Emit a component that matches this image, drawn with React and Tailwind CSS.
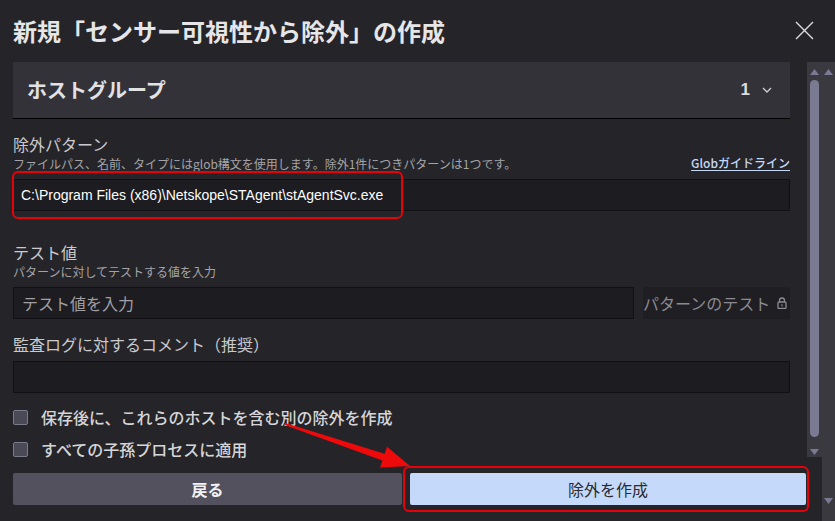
import React from 'react';

const jp = { fontFamily: '"Noto Sans CJK JP", "Noto Sans", sans-serif' };
const latin = { fontFamily: '"Liberation Sans", "Noto Sans CJK JP", sans-serif' };

// small triangle used by the scrollbars
const Tri = ({ down = false }) => (
    <svg width="9" height="6" viewBox="0 0 9 6" className="block">
        {down ? <path d="M0 0 H9 L4.5 6 Z" fill="#7b7a93" /> : <path d="M0 6 H9 L4.5 0 Z" fill="#7b7a93" />}
    </svg>
);

const FieldLabel = ({ title, sub, className = '' }) => (
    <div className={className}>
        <div className="text-[16px] leading-[22px] text-[#cacacd]">{title}</div>
        {sub && <div className="text-[12px] leading-[18px] text-[#a4a4a8]">{sub}</div>}
    </div>
);

const Checkbox = ({ label, className = '' }) => (
    <div className={`flex items-center gap-[13px] ${className}`}>
        <span className="h-[15px] w-[15px] rounded-[2px] border border-[#7c7b8c] bg-[#4a4956]" />
        <span className="text-[16px] font-medium leading-[18px] text-[#d6d6d8]">{label}</span>
    </div>
);

export default function App() {
    return (
        <div className="relative h-[521px] w-[835px] overflow-hidden bg-[#252429] text-white" style={jp}>
            {/* header */}
            <div className="flex h-[62px] items-center justify-between pl-[13px] pr-[21px]">
                <h1 className="text-[24px] font-bold leading-none text-[#e6e6e8]">
                    新規「センサー可視性から除外」の作成
                </h1>
                <svg width="19" height="19" viewBox="0 0 19 19" className="mt-[-1px]">
                    <path d="M1 1 L18 18 M18 1 L1 18" stroke="#dcdcdf" strokeWidth="1.4" />
                </svg>
            </div>

            <div className="flex h-[459px]">
                <div className="flex w-[822px] flex-col">
                    {/* scrolling body */}
                    <div className="flex h-[395px]">
                        <div className="w-[807px] pl-[13px] pr-[17px]">
                            <div className="flex h-[57px] items-center justify-between border-b border-black bg-[#333238] pl-[14px] pr-[18px]">
                                <span className="text-[20px] font-bold text-[#e2e2e4]">ホストグループ</span>
                                <div className="flex items-center gap-[12px]">
                                    <span className="text-[17px] font-bold text-[#dcdcdf]" style={latin}>1</span>
                                    <svg width="10" height="6" viewBox="0 0 10 6">
                                        <path d="M1 1 L5 5 L9 1" fill="none" stroke="#cfcfd3" strokeWidth="1.3" />
                                    </svg>
                                </div>
                            </div>

                            <div className="mt-[14px] flex items-end justify-between">
                                <FieldLabel
                                    title="除外パターン"
                                    sub="ファイルパス、名前、タイプにはglob構文を使用します。除外1件につきパターンは1つです。"
                                />
                                <a className="mb-[1px] text-[12px] font-medium leading-[18px] text-[#c5d8f6] underline underline-offset-2">
                                    Globガイドライン
                                </a>
                            </div>
                            <div className="mt-[6px] flex h-[32px] items-center border border-[#111014] bg-[#1d1c20] px-[7px]">
                                <span className="text-[14px] text-white" style={latin}>
                                    C:\Program Files (x86)\Netskope\STAgent\stAgentSvc.exe
                                </span>
                            </div>

                            <FieldLabel className="mt-[30px]" title="テスト値" sub="パターンに対してテストする値を入力" />
                            <div className="mt-[6px] flex gap-[9px]">
                                <div className="flex h-[32px] w-[621px] items-center border border-[#111014] bg-[#1d1c20] px-[8px]">
                                    <span className="text-[16px] leading-[20px] text-[#a09fa4]">テスト値を入力</span>
                                </div>
                                <div className="flex h-[32px] flex-1 items-center justify-between rounded-[2px] bg-[#1f1e23] pr-[3px]">
                                    <span className="whitespace-nowrap text-[16px] leading-[20px] text-[#8b8a92]">パターンのテスト</span>
                                    <svg width="10" height="12" viewBox="0 0 10 12">
                                        <path d="M2.5 5 V3.5 a2.5 2.5 0 0 1 5 0 V5" fill="none" stroke="#8b8a92" strokeWidth="1.3" />
                                        <rect x="1" y="5" width="8" height="6.5" rx="1" fill="none" stroke="#8b8a92" strokeWidth="1.3" />
                                        <rect x="4.4" y="7.3" width="1.2" height="2" fill="#8b8a92" />
                                    </svg>
                                </div>
                            </div>

                            <FieldLabel className="mt-[14px]" title="監査ログに対するコメント（推奨）" />
                            <div className="mt-[6px] h-[32px] border border-[#111014] bg-[#1d1c20]" />

                            <Checkbox className="mt-[15px]" label="保存後に、これらのホストを含む別の除外を作成" />
                            <Checkbox className="mt-[14px]" label="すべての子孫プロセスに適用" />
                        </div>

                        {/* inner scrollbar */}
                        <div className="flex w-[15px] flex-col items-center bg-[#3a3940] pt-[7px]">
                            <Tri />
                            <div className="mt-[5px] h-[357px] w-[9px] rounded-full bg-[#7b7a93]" />
                            <div className="mt-[12px]"><Tri down /></div>
                        </div>
                    </div>

                    {/* footer */}
                    <div className="flex gap-[8px] pl-[13px] pt-[16px]">
                        <button className="h-[32px] w-[389px] rounded-[2px] bg-[#52515d] text-[16px] font-bold text-[#f2f2f4]">
                            戻る
                        </button>
                        <button className="h-[32px] w-[396px] rounded-[2px] bg-[#c5dafa] text-[16px] text-[#2b2b30]">
                            除外を作成
                        </button>
                    </div>
                </div>

                {/* outer scrollbar */}
                <div className="flex w-[13px] flex-col items-center bg-[#3a3940] pt-[7px]">
                    <Tri />
                    <div className="mt-[423px]"><Tri down /></div>
                </div>
            </div>

            {/* red annotations */}
            <div className="pointer-events-none absolute left-[12px] top-[171px] h-[48px] w-[391px] rounded-[6px] border-2 border-[#e8000b]" />
            <div className="pointer-events-none absolute left-[403px] top-[466px] h-[46px] w-[406px] rounded-[6px] border-2 border-[#e8000b]" />
            <svg className="pointer-events-none absolute left-0 top-0" width="835" height="521">
                <polygon
                    points="285.3,423.1 384.6,453.8 387,446.7 410,466 380,467.5 382.4,460.4 284.7,424.9"
                    fill="#ee0a0a"
                />
            </svg>
        </div>
    );
}
